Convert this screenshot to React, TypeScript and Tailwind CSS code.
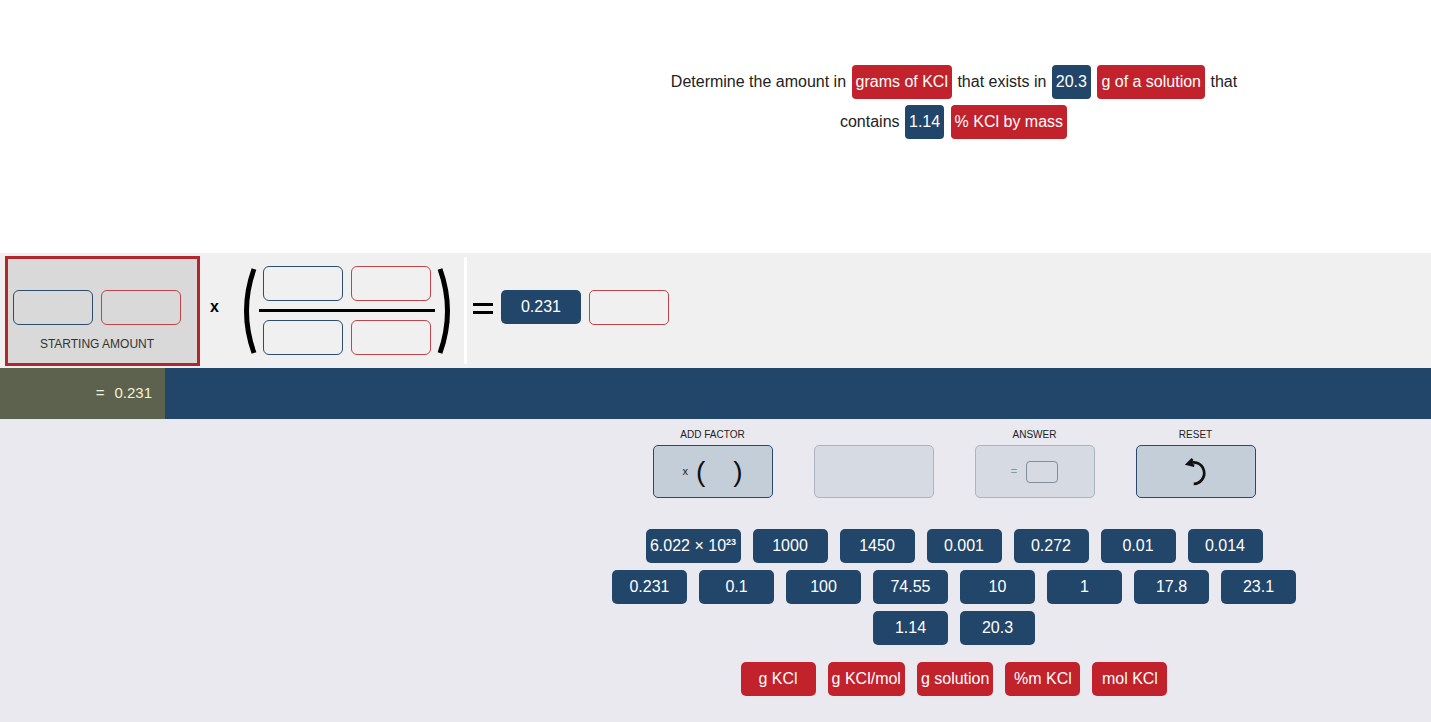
import React from 'react';

const font = { fontFamily: '"Liberation Sans", Arial, sans-serif' };

function Badge({ children, red }: { children: React.ReactNode; red?: boolean }) {
  return (
    <span
      className={`mx-[1px] inline-block rounded-[4px] px-[4px] leading-[34px] text-white ${
        red ? 'bg-[#c1222b]' : 'bg-[#22466a]'
      }`}
    >
      {children}
    </span>
  );
}

function Slot({ red }: { red?: boolean }) {
  return (
    <div
      className={`h-[35px] w-[80px] rounded-[6px] border ${
        red ? 'border-[#c0444a]' : 'border-[#2e4d6e]'
      }`}
    />
  );
}

function Paren({ flip }: { flip?: boolean }) {
  return (
    <svg width="20" height="92" viewBox="0 0 20 92" className={flip ? 'scale-x-[-1]' : ''}>
      <path d="M15 4 Q0 46 15 88" fill="none" stroke="#000" strokeWidth="5" />
    </svg>
  );
}

function Tile({ children, w = 'w-[75px]' }: { children: React.ReactNode; w?: string }) {
  return (
    <div
      className={`flex h-[34px] ${w} items-center justify-center rounded-[5px] bg-[#22466a] text-[16px] text-white`}
    >
      {children}
    </div>
  );
}

function Unit({ children }: { children: React.ReactNode }) {
  return (
    <div className="flex h-[34px] min-w-[75px] items-center justify-center rounded-[5px] bg-[#c1222b] px-[4px] text-[16px] text-white">
      {children}
    </div>
  );
}

export default function App() {
  return (
    <div className="w-full bg-[#e9e9ef]" style={font}>
      {/* Question */}
      <div className="grid h-[253px] grid-cols-3 bg-white">
        <div />
        <div className="col-span-2 pt-[62px]">
          <p className="mx-auto max-w-[590px] text-center text-[16px] leading-[40px] text-[#222]">
            Determine the amount in <Badge red>grams of KCl</Badge> that exists in{' '}
            <Badge>20.3</Badge> <Badge red>g of a solution</Badge> that contains{' '}
            <Badge>1.14</Badge> <Badge red>% KCl by mass</Badge>
          </p>
        </div>
      </div>

      {/* Equation */}
      <div className="flex h-[115px] items-center bg-[#f0f0f0]">
        <div className="ml-[5px] flex h-[110px] w-[195px] border-[3px] border-[#b3262c] bg-[#d9d9d9] pl-[5px]">
          <div className="flex flex-col items-center">
            <div className="mt-[31px] flex gap-[8px]">
              <Slot />
              <Slot red />
            </div>
            <div className="mt-[10px] text-[12px] text-[#333]">STARTING AMOUNT</div>
          </div>
        </div>
        <div className="mb-[8px] ml-[10px] w-[10px] text-[16px] font-bold text-black">x</div>
        <div className="ml-[19px] flex items-center">
          <Paren />
          <div className="flex flex-col items-center">
            <div className="flex gap-[8px] px-[2px]">
              <Slot />
              <Slot red />
            </div>
            <div className="my-[8px] h-[3px] w-[176px] bg-black" />
            <div className="flex gap-[8px] px-[2px]">
              <Slot />
              <Slot red />
            </div>
          </div>
          <Paren flip />
        </div>
        <div className="ml-[9px] h-[107px] w-[3px] rounded-full bg-white" />
        <div className="mb-[4px] ml-[6px] flex w-[20px] flex-col gap-[5px]">
          <div className="h-[3px] bg-black" />
          <div className="h-[3px] bg-black" />
        </div>
        <div className="mb-[8px] ml-[8px] flex h-[34px] w-[80px] items-center justify-center rounded-[5px] bg-[#22466a] text-[16px] text-white">
          0.231
        </div>
        <div className="mb-[7px] ml-[8px] h-[35px] w-[80px] rounded-[5px] border border-[#c0444a]" />
      </div>

      {/* Result bar */}
      <div className="flex h-[51px] bg-[#22466a]">
        <div className="flex w-[165px] items-center justify-end bg-[#5d624e] pr-[13px] text-[15px] text-[#f6f0d2]">
          <span className="mr-[10px]">=</span>0.231
        </div>
      </div>

      {/* Controls */}
      <div className="grid h-[303px] grid-cols-3">
        <div />
        <div className="col-span-2 flex flex-col items-center pt-[10px]">
          <div className="flex gap-[41px]">
            <div className="flex w-[120px] flex-col items-center">
              <div className="h-[16px] text-[10px] leading-[11px] text-[#222]">ADD FACTOR</div>
              <div className="flex h-[53px] w-[120px] items-center justify-center gap-[8px] rounded-[5px] border border-[#2a4a6c] bg-[#c4ced9]">
                <span className="text-[11px] text-[#222]">x</span>
                <span className="text-[28px] leading-none text-[#111]">(</span>
                <span className="w-[12px]" />
                <span className="text-[28px] leading-none text-[#111]">)</span>
              </div>
            </div>
            <div className="flex w-[120px] flex-col items-center">
              <div className="h-[16px]" />
              <div className="h-[53px] w-[120px] rounded-[5px] border border-[#aab4c2] bg-[#d5dae3]" />
            </div>
            <div className="flex w-[120px] flex-col items-center">
              <div className="h-[16px] text-[10px] leading-[11px] text-[#222]">ANSWER</div>
              <div className="flex h-[53px] w-[120px] items-center justify-center gap-[9px] rounded-[5px] border border-[#aab4c2] bg-[#d5dae3]">
                <span className="text-[11px] text-[#8a929c]">=</span>
                <div className="h-[22px] w-[32px] rounded-[4px] border border-[#858d98]" />
              </div>
            </div>
            <div className="flex w-[120px] flex-col items-center">
              <div className="h-[16px] text-[10px] leading-[11px] text-[#222]">RESET</div>
              <div className="flex h-[53px] w-[120px] items-center justify-center rounded-[5px] border border-[#2a4a6c] bg-[#c4ced9]">
                <svg width="34" height="34" viewBox="0 0 30 30" fill="none" stroke="#111" strokeWidth="2.4">
                  <path d="M8.5 7.5 A9.5 9.5 0 1 1 13 25.5" />
                  <path d="M12 3.5 L7.5 8 L13.5 9.5" strokeLinejoin="miter" />
                </svg>
              </div>
            </div>
          </div>

          <div className="mt-[31px] flex flex-col items-center gap-[7px]">
            <div className="flex gap-[12px]">
              <Tile w="w-[95px]">
                6.022 × 10<sup className="text-[9px] font-bold">23</sup>
              </Tile>
              <Tile>1000</Tile>
              <Tile>1450</Tile>
              <Tile>0.001</Tile>
              <Tile>0.272</Tile>
              <Tile>0.01</Tile>
              <Tile>0.014</Tile>
            </div>
            <div className="flex gap-[12px]">
              <Tile>0.231</Tile>
              <Tile>0.1</Tile>
              <Tile>100</Tile>
              <Tile>74.55</Tile>
              <Tile>10</Tile>
              <Tile>1</Tile>
              <Tile>17.8</Tile>
              <Tile>23.1</Tile>
            </div>
            <div className="flex gap-[12px]">
              <Tile>1.14</Tile>
              <Tile>20.3</Tile>
            </div>
          </div>

          <div className="mt-[17px] flex gap-[12px]">
            <Unit>g KCl</Unit>
            <Unit>g KCl/mol</Unit>
            <Unit>g solution</Unit>
            <Unit>%m KCl</Unit>
            <Unit>mol KCl</Unit>
          </div>
        </div>
      </div>
    </div>
  );
}
